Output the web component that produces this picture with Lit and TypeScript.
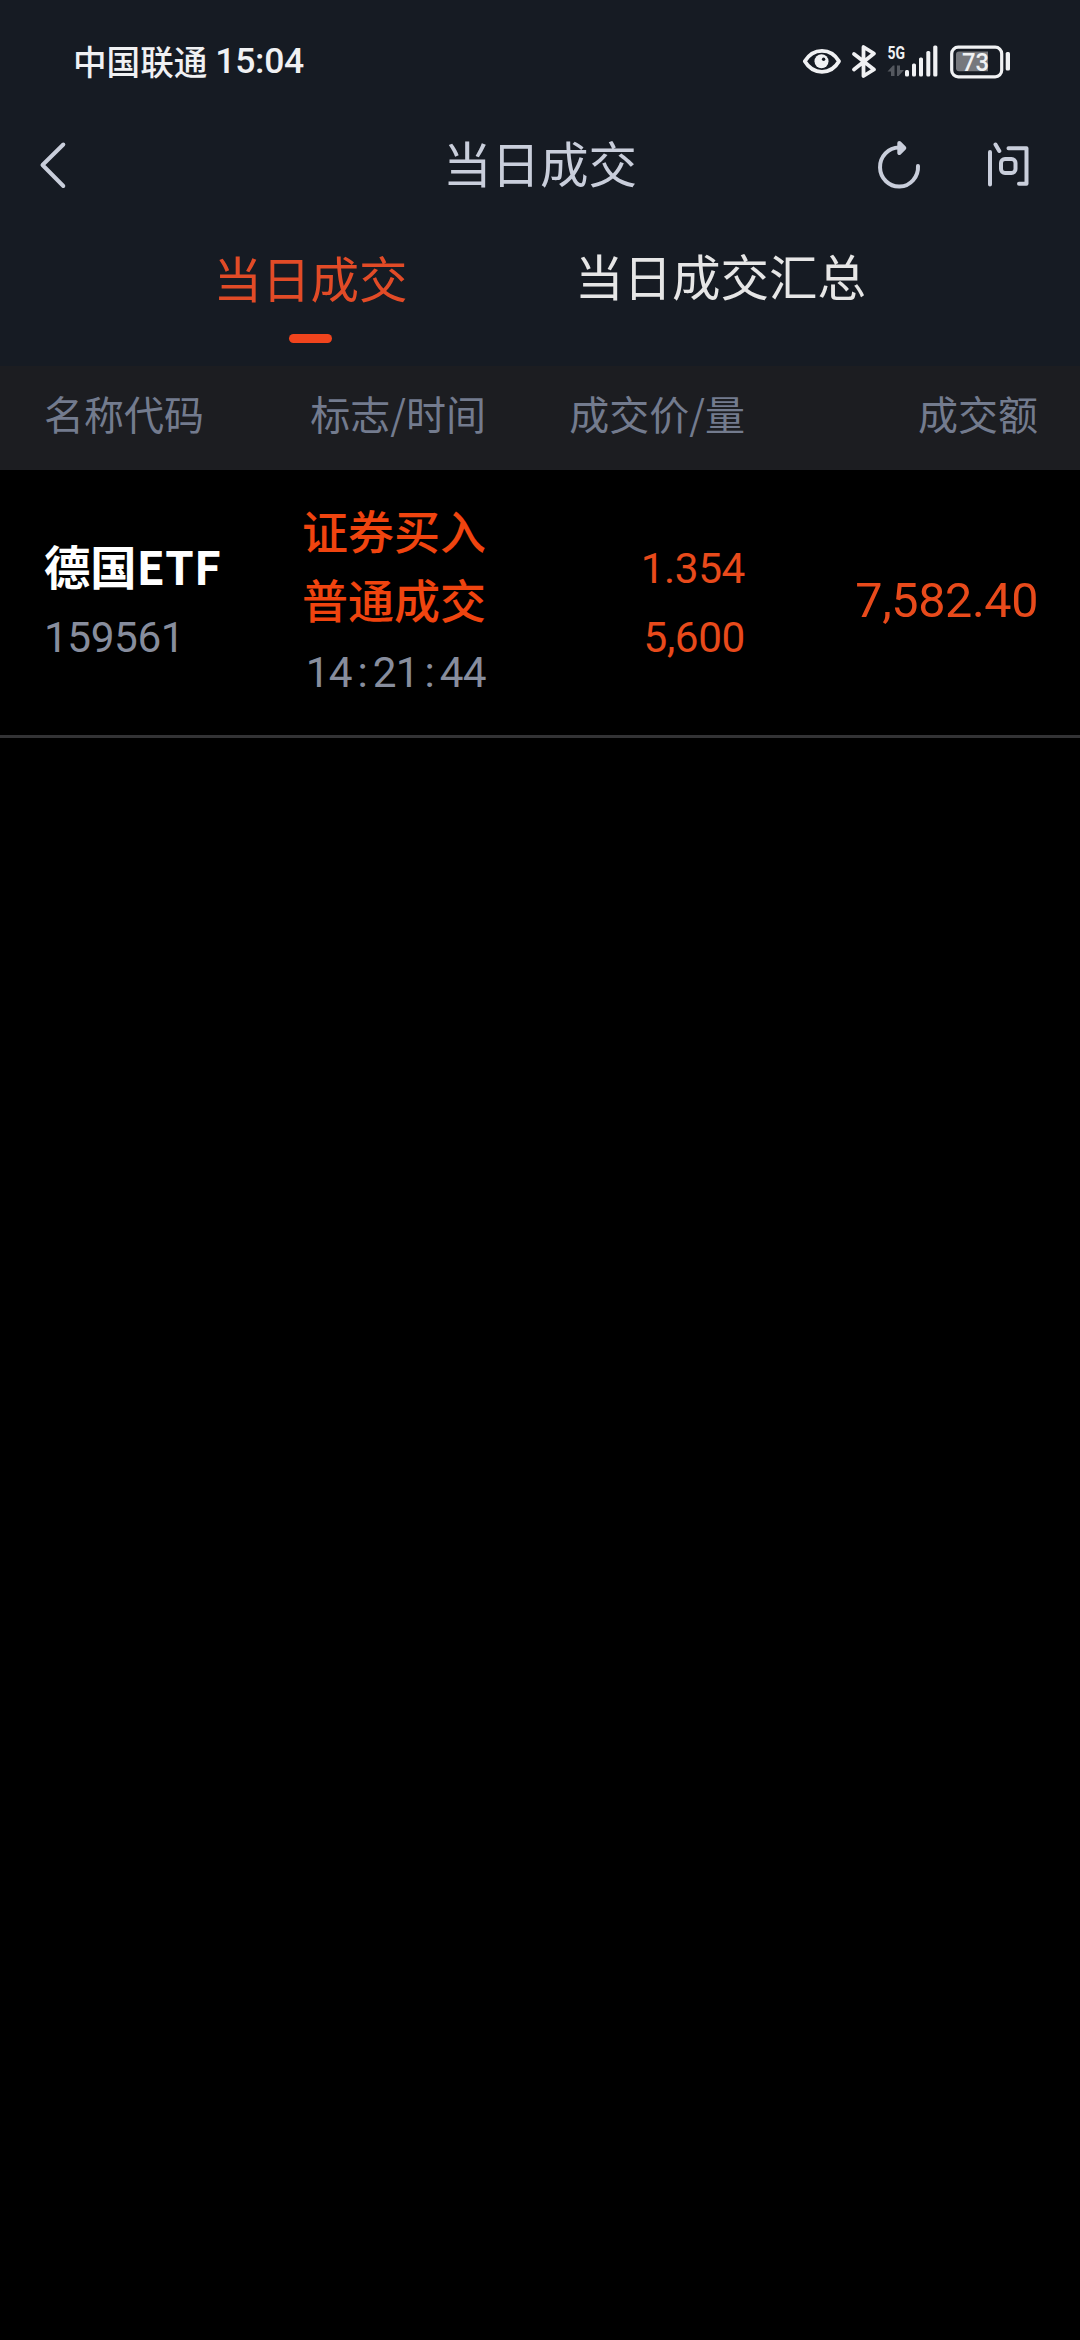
import { LitElement, html, css } from "lit";
import { customElement, property } from "lit/decorators.js";

const family = css`"Noto Sans CJK SC", "Noto Sans", sans-serif`;
const digits = css`Roboto, "Noto Sans CJK SC", sans-serif`;

@customElement("status-bar")
class StatusBar extends LitElement {
  static styles = css`
    :host {
      display: flex;
      justify-content: space-between;
      align-items: center;
      height: 120px;
      padding: 0 69px 0 73px;
      box-sizing: border-box;
      color: #f0f1f3;
      font-family: ${family};
      font-weight: 500;
    }
    .left {
      display: flex;
      align-items: baseline;
      gap: 8px;
      padding-top: 3px;
      line-height: 48px;
    }
    .carrier { font-size: 33.6px; }
    .clock {
      position: relative;
      top: -1.5px;
      font-family: ${digits};
      font-size: 35.5px;
      letter-spacing: -0.3px;
    }
    .icons { display: flex; }
    svg { display: block; }
    .net { font-family: ${digits}; font-size: 18px; font-weight: 700; }
    .pct { font-family: ${digits}; font-size: 26.5px; font-weight: 500; }
  `;
  render() {
    return html`
      <div class="left">
        <span class="carrier">中国联通</span><span class="clock">15:04</span>
      </div>
      <div class="icons">
        <svg width="211" height="60" viewBox="800 30 211 60" fill="none">
          <path d="M804.8 61.3C813 47.3 831 47.3 839 61.3C831 75.3 813 75.3 804.8 61.3Z" stroke="#f0f1f3" stroke-width="3.8" stroke-linejoin="round" />
          <circle cx="821.5" cy="61.3" r="7" fill="#f0f1f3" />
          <circle cx="823.6" cy="59.3" r="1.7" fill="#161b23" />
          <path d="M854 54L874 69.5L863.5 76V47L874 53.5L854 69.5" stroke="#f0f1f3" stroke-width="3.8" stroke-linejoin="round" stroke-linecap="round" />
          <text class="net" x="887.5" y="59" textLength="17.5" lengthAdjust="spacingAndGlyphs" fill="#f0f1f3">5G</text>
          <path d="M887.5 71.5L893 65.5H894.5V76H891V71.5ZM897 65.5H900V70H904L898.5 76H897Z" fill="#54585f" />
          <g fill="#f0f1f3">
            <rect x="905" y="70" width="4" height="6.5" rx="1.5" />
            <rect x="912" y="63.5" width="4" height="13" rx="1.5" />
            <rect x="919" y="57.5" width="4" height="19" rx="1.5" />
            <rect x="926.3" y="51" width="4" height="25.5" rx="1.5" />
            <rect x="933.2" y="45.5" width="4.2" height="31" rx="1.5" />
            <rect x="1005.7" y="52" width="4.3" height="18.5" rx="1.5" />
          </g>
          <rect x="951.7" y="47.2" width="50" height="29.6" rx="6.5" stroke="#f0f1f3" stroke-width="3.2" />
          <path d="M959 51.5H988V71.3H959Q956 71.3 956 68.3V54.5Q956 51.5 959 51.5Z" fill="#76787d" />
          <text class="pct" x="962" y="71" textLength="27" lengthAdjust="spacingAndGlyphs" fill="#f0f1f3">73</text>
        </svg>
      </div>
    `;
  }
}

@customElement("nav-bar")
class NavBar extends LitElement {
  @property() heading = "";
  static styles = css`
    :host {
      display: grid;
      grid-template-columns: 1fr auto 1fr;
      align-items: center;
      height: 90px;
      padding: 0 49px 0 38px;
      box-sizing: border-box;
      color: #c9cedb;
      font-family: ${family};
    }
    .title {
      font-size: 48.5px;
      line-height: 84px;
      padding: 0 0 6px 11px;
    }
    .actions {
      display: flex;
      justify-content: flex-end;
      gap: 62px;
    }
    svg { display: block; }
    .line {
      fill: none;
      stroke: #c9cedb;
      stroke-width: 4;
      stroke-linecap: round;
      stroke-linejoin: round;
    }
  `;
  render() {
    return html`
      <svg class="line" width="30" height="50" viewBox="38 140 30 50">
        <path d="M63.3 144.5L42.5 165L63.3 186" />
      </svg>
      <span class="title">${this.heading}</span>
      <div class="actions">
        <svg class="line" width="46" height="50" viewBox="876 140 46 50">
          <path d="M918 166A19 19.5 0 1 1 899 147.6" />
          <path d="M899.3 143L904.3 148L899.3 153Z" fill="#c9cedb" />
        </svg>
        <svg class="line" width="47" height="50" viewBox="984 140 47 50">
          <path d="M990 152V184.500M995.5 144.5L999.3 151M1008.5 148.2H1026.5V183.7H1019" />
          <rect x="1001" y="159" width="14.5" height="14" rx="4" />
        </svg>
      </div>
    `;
  }
}

@customElement("tab-strip")
class TabStrip extends LitElement {
  @property({ attribute: false }) tabs: string[] = [];
  @property({ type: Number }) active = 0;
  static styles = css`
    :host {
      display: flex;
      justify-content: space-between;
      height: 156px;
      padding: 0 214px 0 213.5px;
      box-sizing: border-box;
      color: #e6e6e6;
      font-family: ${family};
      font-size: 48.5px;
      line-height: 70px;
    }
    .tab {
      display: flex;
      flex-direction: column;
      align-items: center;
      padding-top: 30px;
    }
    .active {
      color: #e24b27;
      padding-top: 32px;
    }
    .mark {
      width: 43px;
      height: 9px;
      margin-top: 22px;
      border-radius: 5px;
      background: #f0441d;
    }
  `;
  render() {
    return this.tabs.map((label, i) =>
      i === this.active
        ? html`<div class="tab active"><span>${label}</span><i class="mark"></i></div>`
        : html`<div class="tab"><span>${label}</span></div>`
    );
  }
}

interface Trade {
  name: string;
  code: string;
  side: string;
  kind: string;
  time: string;
  price: string;
  volume: string;
  amount: string;
}

@customElement("trade-table")
class TradeTable extends LitElement {
  @property({ attribute: false }) trades: Trade[] = [];
  static styles = css`
    :host {
      display: block;
      font-family: ${family};
    }
    .head, .row {
      display: grid;
      grid-template-columns: 200px 242px 259px 1fr;
      align-items: center;
      padding: 0 42px 0 44px;
      box-sizing: border-box;
    }
    .head {
      height: 104px;
      padding-bottom: 11px;
      background: #1c1d21;
      color: #737b8e;
      font-size: 40px;
      line-height: 60px;
    }
    .row {
      height: 268px;
      padding-bottom: 4px;
      border-bottom: 3px solid #333335;
      background: #000;
      line-height: 69px;
      font-size: 42.3px;
      color: #878d9d;
    }
    .cell {
      display: flex;
      flex-direction: column;
      text-align: right;
      white-space: nowrap;
    }
    .first { text-align: left; }
    .name {
      color: #fff;
      font-family: ${family};
      font-size: 46.3px;
      font-weight: 700;
    }
    .code {
      margin-top: 4px;
      font-family: ${digits};
      letter-spacing: -0.4px;
    }
    .side {
      color: #f0440f;
      font-size: 46px;
      font-weight: 500;
    }
    .trio { padding-top: 1px; }
    .time {
      margin-top: 5px;
      font-family: ${digits};
      letter-spacing: -0.6px;
    }
    .colon { padding: 0 5.5px; }
    .num {
      color: #e84a1b;
      font-family: ${digits};
      letter-spacing: -0.4px;
    }
    .pair { margin-top: 4px; }
    .amount { font-size: 48.5px; }
  `;
  renderTime(time: string) {
    return time.split(":").map((part, i) => (i ? html`<span class="colon">:</span>${part}` : part));
  }
  render() {
    return html`
      <div class="head">
        <span class="cell first">名称代码</span>
        <span class="cell">标志/时间</span>
        <span class="cell">成交价/量</span>
        <span class="cell">成交额</span>
      </div>
      ${this.trades.map(
        (t) => html`
          <div class="row">
            <div class="cell first">
              <span class="name">${t.name}</span>
              <span class="code">${t.code}</span>
            </div>
            <div class="cell trio">
              <span class="side">${t.side}</span>
              <span class="side">${t.kind}</span>
              <span class="time">${this.renderTime(t.time)}</span>
            </div>
            <div class="cell num pair">
              <span>${t.price}</span>
              <span>${t.volume}</span>
            </div>
            <div class="cell num amount">${t.amount}</div>
          </div>
        `
      )}
    `;
  }
}

@customElement("app-root")
class AppRoot extends LitElement {
  static styles = css`
    :host {
      display: block;
      min-height: 2340px;
      background: #000;
    }
    .top { background: #161b23; }
  `;
  trades: Trade[] = [
    {
      name: "德国ETF",
      code: "159561",
      side: "证券买入",
      kind: "普通成交",
      time: "14:21:44",
      price: "1.354",
      volume: "5,600",
      amount: "7,582.40",
    },
  ];
  render() {
    return html`
      <header class="top">
        <status-bar></status-bar>
        <nav-bar heading="当日成交"></nav-bar>
        <tab-strip .tabs=${["当日成交", "当日成交汇总"]} .active=${0}></tab-strip>
      </header>
      <trade-table .trades=${this.trades}></trade-table>
    `;
  }
}
